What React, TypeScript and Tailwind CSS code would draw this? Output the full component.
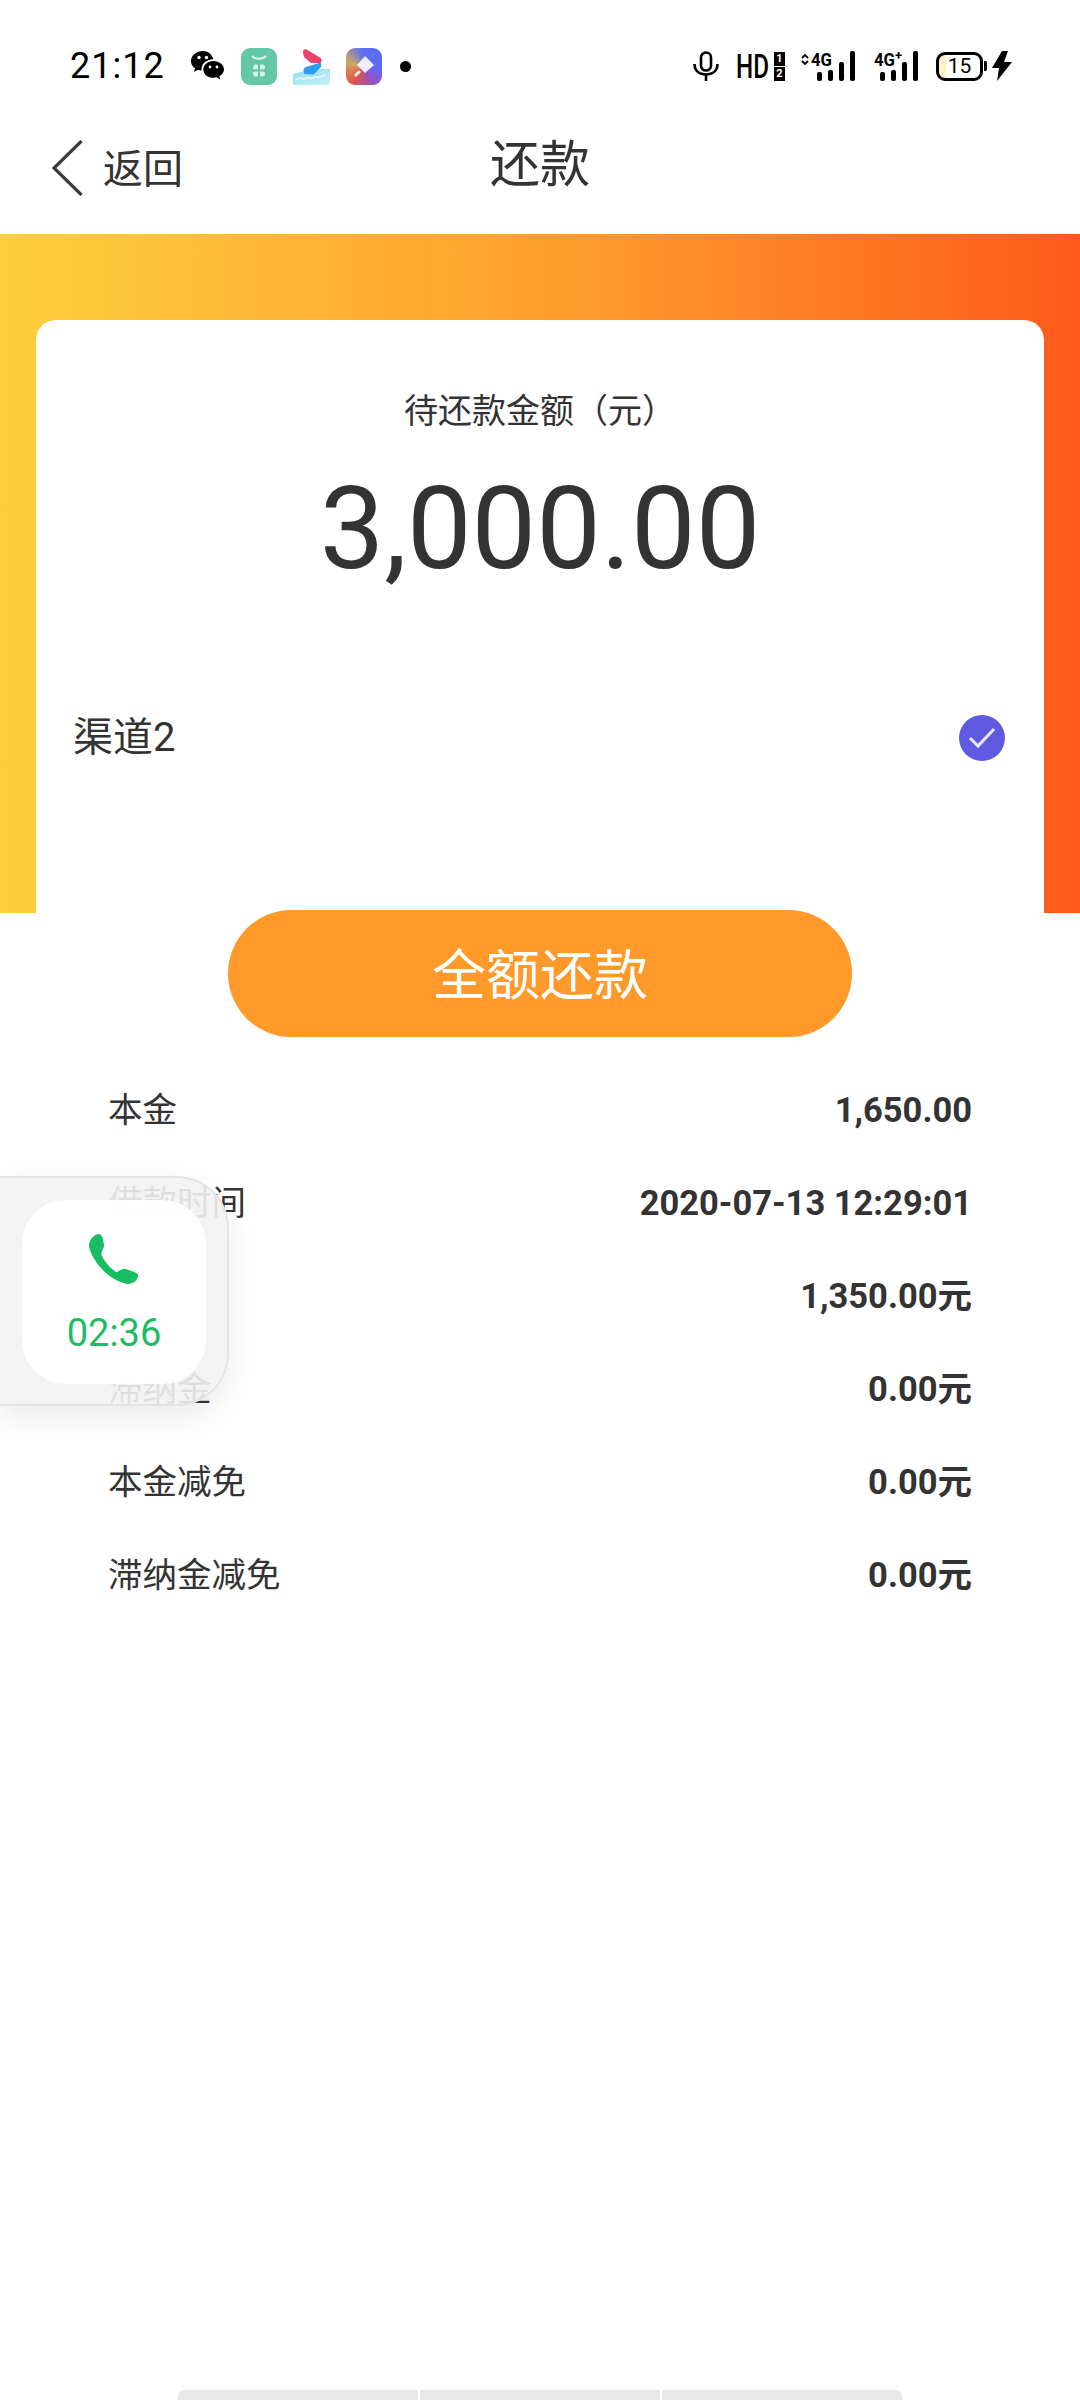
const font = "font-['Roboto','Noto_Sans_CJK_SC',sans-serif]";

const rows = [
  { label: "本金", value: "1,650.00" },
  { label: "借款时间", value: "2020-07-13 12:29:01" },
  { label: "", value: "1,350.00元" },
  { label: "滞纳金", value: "0.00元" },
  { label: "本金减免", value: "0.00元" },
  { label: "滞纳金减免", value: "0.00元" },
];

function Wechat() {
  return (
    <svg width="33" height="30" viewBox="0 0 33 30">
      <path d="M12 0C5.500 0 0 4.400 0 10c0 3 1.600 5.600 4 7.400L3 21l4-2.200c1.200.4 2.500.6 3.600.6C10 13 15 8.500 22.500 8.300 21 3.500 17 0 12 0Z" fill="#000" />
      <path d="M22.500 10C16.800 10 12.300 13.800 12.300 18.400s4.500 8.400 10.200 8.400c1.100 0 2.200-.2 3.200-.5l3.500 2.200-.9-3.300c2.800-1.600 4.700-4 4.700-6.800 0-4.600-4.800-8.400-10.500-8.400Z" fill="#000" />
      <circle cx="8" cy="6.500" r="1.700" fill="#fff" />
      <circle cx="15.500" cy="6.500" r="1.700" fill="#fff" />
      <circle cx="19" cy="16" r="1.400" fill="#fff" />
      <circle cx="26" cy="16" r="1.400" fill="#fff" />
    </svg>
  );
}

function GreenApp() {
  return (
    <svg width="36" height="37" viewBox="0 0 36 37">
      <rect width="36" height="37" rx="9" fill="#63c7a8" />
      <path d="M11 8c3 3.500 11 3.500 14 0" stroke="#d9f3ea" strokeWidth="2" fill="none" />
      <path d="M12 19.500c0-2 1-3 2.500-3h1.500c.800 0 1 .500 1 1v3c0 .500-.200 1-1 1h-2c-1.200 0-2-.800-2-2ZM24 19.500c0-2-1-3-2.500-3H20c-.800 0-1 .500-1 1v3c0 .500.200 1 1 1h2c1.200 0 2-.800 2-2ZM12 25.500c0 2 1 3 2.500 3h1.500c.800 0 1-.500 1-1v-3c0-.500-.200-1-1-1h-2c-1.200 0-2 .800-2 2ZM24 25.500c0 2-1 3-2.500 3H20c-.800 0-1-.500-1-1v-3c0-.500.200-1 1-1h2c1.200 0 2 .800 2 2Z" fill="#d9f3ea" />
    </svg>
  );
}

function PlayApp() {
  return (
    <svg width="37" height="37" viewBox="0 0 37 37">
      <defs>
        <linearGradient id="wave" x1="0" y1="0" x2="1" y2="1">
          <stop offset="0" stopColor="#8fdff0" />
          <stop offset="1" stopColor="#c4f2f5" />
        </linearGradient>
      </defs>
      <path d="M0 26c8-2 28-6 37-5v14q0 2-2 2H2q-2 0-2-2Z" fill="url(#wave)" />
      <path d="M10 4.500C9.500 2 11.500.5 13.500 1.500L27 9.500c2 1.300 2 3.700.5 5.500L18 15 11 9Z" fill="#ee3f6d" />
      <path d="M27.500 14.500 13 19c-2.500 1-3.500 4-1.500 7l9 .5 7.500-7.500c.5-2 0-3.500-.5-4.500Z" fill="#2a9df0" />
      <path d="M3 32c3-3 5-2 7-1s4-3 6-1 5-2 8-1 4-1 8-2" stroke="#f0f6fb" strokeWidth="1.500" fill="none" />
    </svg>
  );
}

function PopsicleApp() {
  return (
    <div className="flex h-[37px] w-[36px] items-center justify-center rounded-[9px] bg-[conic-gradient(from_215deg,#e0524c,#d2a860_70deg,#5b6cf5_140deg,#5b6cf5_240deg,#9a50c0_300deg,#e0524c)]">
      <svg width="26" height="26" viewBox="0 0 26 26">
        <path d="M14 3 23 12 14 20 6 12Z" fill="#eeeefc" />
        <path d="M8 17 3 22 5 24 10 19Z" fill="#f6eee8" />
      </svg>
    </div>
  );
}

function Mic() {
  return (
    <svg width="26" height="30" viewBox="0 0 26 30" fill="none" stroke="#000" strokeWidth="2.600">
      <rect x="8" y="1.500" width="10" height="18" rx="5" />
      <path d="M1.500 13c0 7 5 10.500 11.500 10.500S24.500 20 24.500 13M13 24v6" />
    </svg>
  );
}

function Signal({ plus }: { plus?: boolean }) {
  return (
    <svg className="overflow-visible" width={plus ? 44 : 56} height="30" viewBox={plus ? "0 0 44 30" : "0 0 56 30"}>
      {!plus && (
        <path d="M3 7 6 4 9 7M3 10 6 13 9 10" stroke="#000" strokeWidth="1.800" fill="none" />
      )}
      <text x={plus ? 0 : 12} y="15" fontSize="19" fontWeight="700" fontFamily="Roboto" textLength="21" lengthAdjust="spacingAndGlyphs">
        4G
      </text>
      {plus && (
        <text x="21" y="9" fontSize="13" fontWeight="700" fontFamily="Roboto">
          +
        </text>
      )}
      <g transform={plus ? "translate(6 0)" : "translate(18 0)"}>
        <rect x="0" y="21" width="5" height="9" rx="2" />
        <rect x="11" y="19" width="5" height="11" rx="2" />
        <rect x="22" y="11" width="5" height="19" rx="2" />
        <rect x="33" y="0" width="5" height="30" rx="2" />
      </g>
    </svg>
  );
}

function StatusBar() {
  return (
    <div className="flex h-[100px] items-center pt-[32px]">
      <span className="ml-[70px] w-[121px] text-[36px] leading-[36px] font-['Roboto',sans-serif] text-black tracking-[1px]">
        21:12
      </span>
      <div className="flex items-center">
        <Wechat />
        <div className="ml-[17px]">
          <GreenApp />
        </div>
        <div className="ml-[16px]">
          <PlayApp />
        </div>
        <div className="ml-[16px]">
          <PopsicleApp />
        </div>
        <div className="ml-[18px] h-[11px] w-[11px] rounded-full bg-black" />
      </div>
      <div className="ml-auto mr-[68px] flex items-center">
        <Mic />
        <svg className="ml-[17px] overflow-visible" width="34" height="30" viewBox="0 0 34 30">
          <text x="0" y="27" fontSize="33" fontWeight="500" fontFamily="Roboto" textLength="33" lengthAdjust="spacingAndGlyphs">
            HD
          </text>
        </svg>
        <div className="ml-[4px] flex h-[29px] w-[11px] flex-col justify-between">
          <div className="flex h-[14px] items-center justify-center bg-black text-[11px] leading-[11px] font-bold text-white font-['Roboto',sans-serif]">1</div>
          <div className="flex h-[14px] items-center justify-center bg-black text-[11px] leading-[11px] font-bold text-white font-['Roboto',sans-serif]">2</div>
        </div>
        <div className="ml-[14px]">
          <Signal />
        </div>
        <div className="ml-[19px]">
          <Signal plus />
        </div>
        <div className="ml-[18px] flex h-[29px] w-[47px] items-center justify-center rounded-[9px] border-[3px] border-black bg-[linear-gradient(to_right,#fdf3c8_0_7px,#fff_7px)] text-[21px] leading-none text-black font-['Roboto',sans-serif]">
          15
        </div>
        <div className="ml-[1px] h-[10px] w-[3px] rounded-r-[2px] bg-black" />
        <svg className="ml-[5px]" width="20" height="30" viewBox="0 0 20 30">
          <path d="M10 0 0 17h7l-2 13L20 11h-8l4-11Z" fill="#000" />
        </svg>
      </div>
    </div>
  );
}

function FloatingCall() {
  return (
    <div className="absolute left-0 top-[1176px] h-[230px] w-[229px] rounded-r-[52px] border-y-[2px] border-r-[2px] border-[#e4e4e4] bg-[#f2f2f2]/90 shadow-[0_12px_30px_rgba(0,0,0,0.08)]">
      <div className="absolute left-[22px] top-[22px] flex h-[184px] w-[184px] flex-col items-center rounded-[44px] bg-white/95 pt-[34px]">
        <svg width="50" height="51" viewBox="0 0 50 51">
          <path d="M9 0C12 0 13 2 14 5L15 11C15.500 14 12 17 12.500 21C15 27 21 34 27 38C30 38 33 34 37 35L45 38C48 39 50 41 49 43C47 48 43 50 38 50C20 46 5 30 0 13C-.5 8 3 2 9 0Z" fill="#17bd62" />
        </svg>
        <span className="mt-[26px] text-[38px] leading-[44px] text-[#1fbb64] font-['Roboto',sans-serif]">
          02:36
        </span>
      </div>
    </div>
  );
}

export default function App() {
  return (
    <div className={`relative flex h-[2400px] w-[1080px] flex-col overflow-hidden bg-white ${font} text-[#333]`}>
      <StatusBar />

      <div className="relative flex h-[134px] items-center justify-center">
        <div className="absolute left-[52px] top-[38px] flex items-center">
          <svg width="31" height="56" viewBox="0 0 31 56" fill="none" stroke="#3a3a3a" strokeWidth="3.200">
            <path d="M29.500 1 2 28l27.500 27" />
          </svg>
          <span className="ml-[20px] mt-[4px] text-[40px] leading-[56px]">返回</span>
        </div>
        <h1 className="mb-[4px] text-[50px] leading-[60px] font-normal">还款</h1>
      </div>

      <div className="h-[679px] bg-[linear-gradient(to_right,#fecf3c,#ff9a2c_55%,#ff5a1a)] px-[36px] pt-[86px]">
        <div className="flex h-[593px] flex-col rounded-t-[20px] bg-white">
          <p className="mt-[71px] text-center text-[34px] leading-[40px]">待还款金额（元）</p>
          <p className="mt-[32px] text-center text-[115px] leading-[132px] font-['Roboto',sans-serif]">3,000.00</p>
          <div className="mt-[120px] flex items-center justify-between pl-[37px] pr-[39px]">
            <span className="text-[40px] leading-[46px]">渠道2</span>
            <div className="flex h-[46px] w-[46px] items-center justify-center rounded-full bg-[#5f5ae0]">
              <svg width="28" height="22" viewBox="0 0 28 22" fill="none" stroke="#e8e8fa" strokeWidth="3">
                <path d="M2 11l8 8L26 2" />
              </svg>
            </div>
          </div>
        </div>
      </div>

      <button className="mx-auto mt-[-3px] flex h-[127px] w-[624px] items-center justify-center rounded-full bg-[#ff9a2a] pt-[6px] text-[54px] text-white">
        全额还款
      </button>

      <div className="mt-[27px] flex flex-col px-[108px]">
        {rows.map((row) => (
          <div key={row.value + row.label} className="flex h-[93px] items-center justify-between">
            <span className="text-[34.500px]">{row.label}</span>
            <span className="text-[34.500px] font-bold">{row.value}</span>
          </div>
        ))}
      </div>

      <div className="mx-auto mt-auto flex h-[10px] w-[724px] gap-[2px]">
        <div className="flex-1 rounded-tl-[6px] bg-[#e8e8e8]" />
        <div className="flex-1 bg-[#e8e8e8]" />
        <div className="flex-1 rounded-tr-[6px] bg-[#e8e8e8]" />
      </div>

      <FloatingCall />
    </div>
  );
}
